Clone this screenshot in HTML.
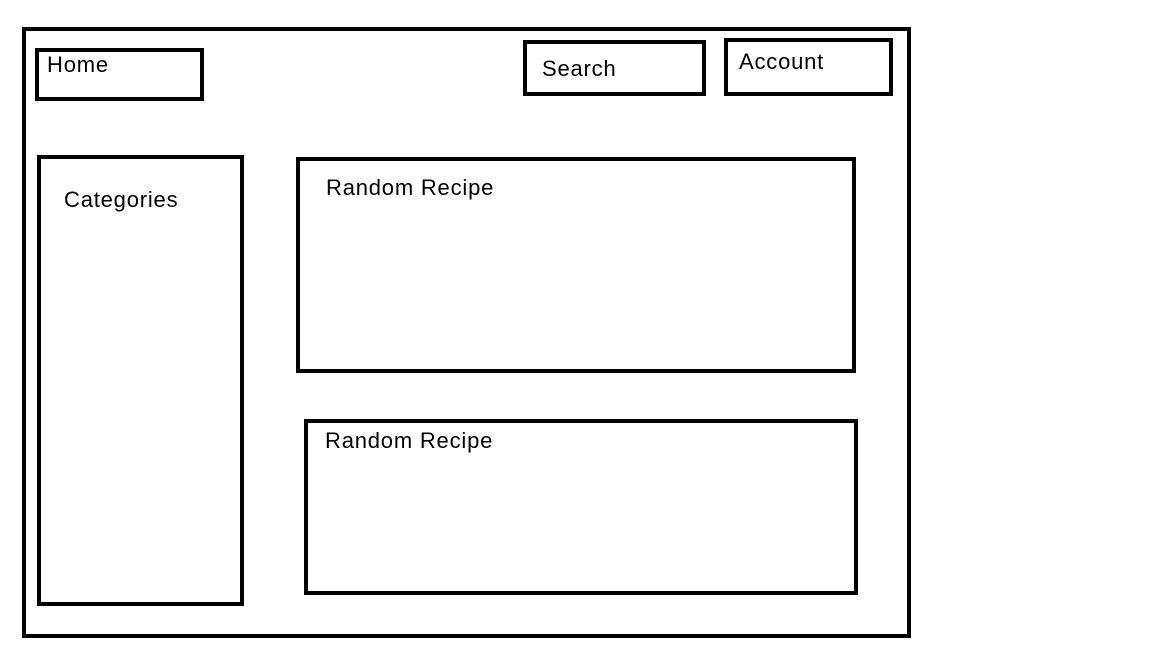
<!DOCTYPE html>
<html><head><meta charset="utf-8"><style>
html,body{margin:0;padding:0;background:#fff;width:1152px;height:648px;overflow:hidden;}
.b{position:absolute;border:4px solid #000;box-sizing:border-box;}
.t{position:absolute;font-family:"Liberation Sans",sans-serif;font-size:22px;letter-spacing:0.8px;color:#000;line-height:1;white-space:nowrap;}
</style></head><body>
<div class="b" style="left:22px;top:27px;width:889px;height:611px;"></div>
<div class="b" style="left:35px;top:48px;width:169px;height:53px;"></div>
<div class="t" style="left:47px;top:54px;">Home</div>
<div class="b" style="left:523px;top:40px;width:183px;height:56px;"></div>
<div class="t" style="left:542px;top:58px;">Search</div>
<div class="b" style="left:724px;top:38px;width:169px;height:58px;"></div>
<div class="t" style="left:739px;top:51px;">Account</div>
<div class="b" style="left:37px;top:155px;width:207px;height:451px;"></div>
<div class="t" style="left:64px;top:189px;">Categories</div>
<div class="b" style="left:296px;top:157px;width:560px;height:216px;"></div>
<div class="t" style="left:326px;top:177px;">Random Recipe</div>
<div class="b" style="left:304px;top:419px;width:554px;height:176px;"></div>
<div class="t" style="left:325px;top:430px;">Random Recipe</div>
</body></html>
